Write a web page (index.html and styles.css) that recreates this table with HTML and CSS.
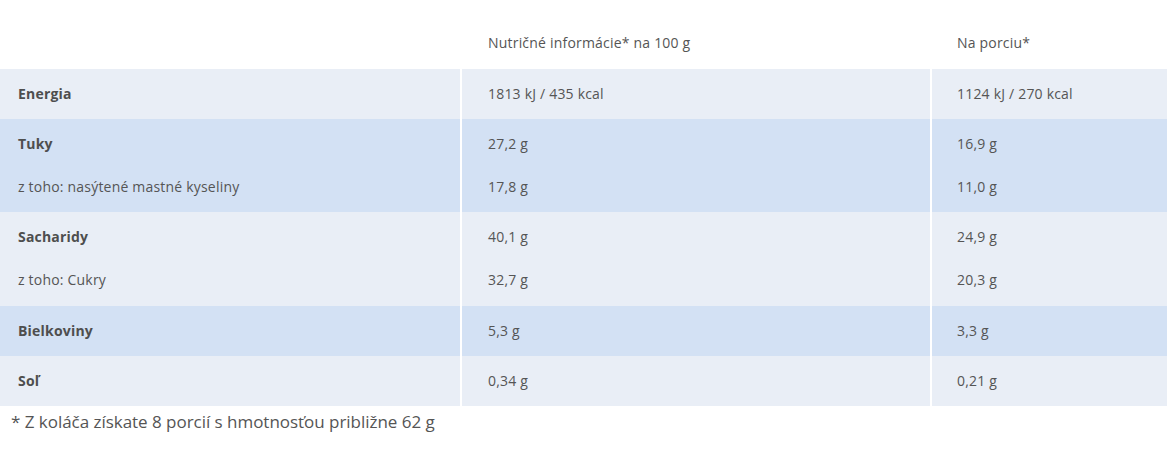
FILE: index.html
```html
<!DOCTYPE html>
<html lang="sk">
<head>
<meta charset="utf-8">
<title>Nutričné informácie</title>
<link rel="stylesheet" href="styles.css">
</head>
<body>
<table class="nutri">
  <thead>
    <tr>
      <th class="c1"></th>
      <th class="c2">Nutričné informácie* na 100 g</th>
      <th class="c3">Na porciu*</th>
    </tr>
  </thead>
  <tbody class="light">
    <tr class="single">
      <td class="c1 label">Energia</td>
      <td class="c2">1813 kJ / 435 kcal</td>
      <td class="c3">1124 kJ / 270 kcal</td>
    </tr>
  </tbody>
  <tbody class="dark">
    <tr class="first">
      <td class="c1 label">Tuky</td>
      <td class="c2">27,2 g</td>
      <td class="c3">16,9 g</td>
    </tr>
    <tr class="second">
      <td class="c1">z toho: nasýtené mastné kyseliny</td>
      <td class="c2">17,8 g</td>
      <td class="c3">11,0 g</td>
    </tr>
  </tbody>
  <tbody class="light">
    <tr class="first">
      <td class="c1 label">Sacharidy</td>
      <td class="c2">40,1 g</td>
      <td class="c3">24,9 g</td>
    </tr>
    <tr class="second tall">
      <td class="c1">z toho: Cukry</td>
      <td class="c2">32,7 g</td>
      <td class="c3">20,3 g</td>
    </tr>
  </tbody>
  <tbody class="dark">
    <tr class="single">
      <td class="c1 label">Bielkoviny</td>
      <td class="c2">5,3 g</td>
      <td class="c3">3,3 g</td>
    </tr>
  </tbody>
  <tbody class="light">
    <tr class="single">
      <td class="c1 label">Soľ</td>
      <td class="c2">0,34 g</td>
      <td class="c3">0,21 g</td>
    </tr>
  </tbody>
</table>
<p class="note">* Z koláča získate 8 porcií s hmotnosťou približne 62 g</p>
</body>
</html>
```
FILE: styles.css
```css
html, body {
  margin: 0;
  padding: 0;
  background: #ffffff;
}
body {
  font-family: "Open Sans", "Noto Sans", sans-serif;
  color: #555555;
  font-size: 14px;
  letter-spacing: 0.2px;
}
.nutri {
  width: 1167px;
  border-collapse: collapse;
  table-layout: fixed;
}
.nutri th, .nutri td {
  text-align: left;
  font-weight: normal;
  line-height: 20px;
  height: 20px;
  vertical-align: top;
  padding: 0;
}
.nutri .c1 { width: 442px; padding-left: 18px; }
.nutri .c2 { width: 442px; padding-left: 26px; border-left: 2px solid #ffffff; }
.nutri .c3 { padding-left: 25px; border-left: 2px solid #ffffff; }
.nutri thead th {
  padding-top: 33px;
  padding-bottom: 16px;
  border-left: none;
}
.nutri .light { background: #e9eef6; }
.nutri .dark { background: #d3e1f4; }
.nutri .single td { padding-top: 15px; padding-bottom: 15px; }
.nutri .first td { padding-top: 15px; padding-bottom: 7px; }
.nutri .second td { padding-top: 16px; padding-bottom: 15px; }
.nutri .second.tall td { padding-bottom: 16px; }
.nutri .label { font-weight: 700; color: #4e4e4e; }
.note {
  margin: 5px 0 0 0;
  padding-left: 11px;
  font-size: 17px;
  line-height: 22px;
  letter-spacing: -0.03px;
}
```
